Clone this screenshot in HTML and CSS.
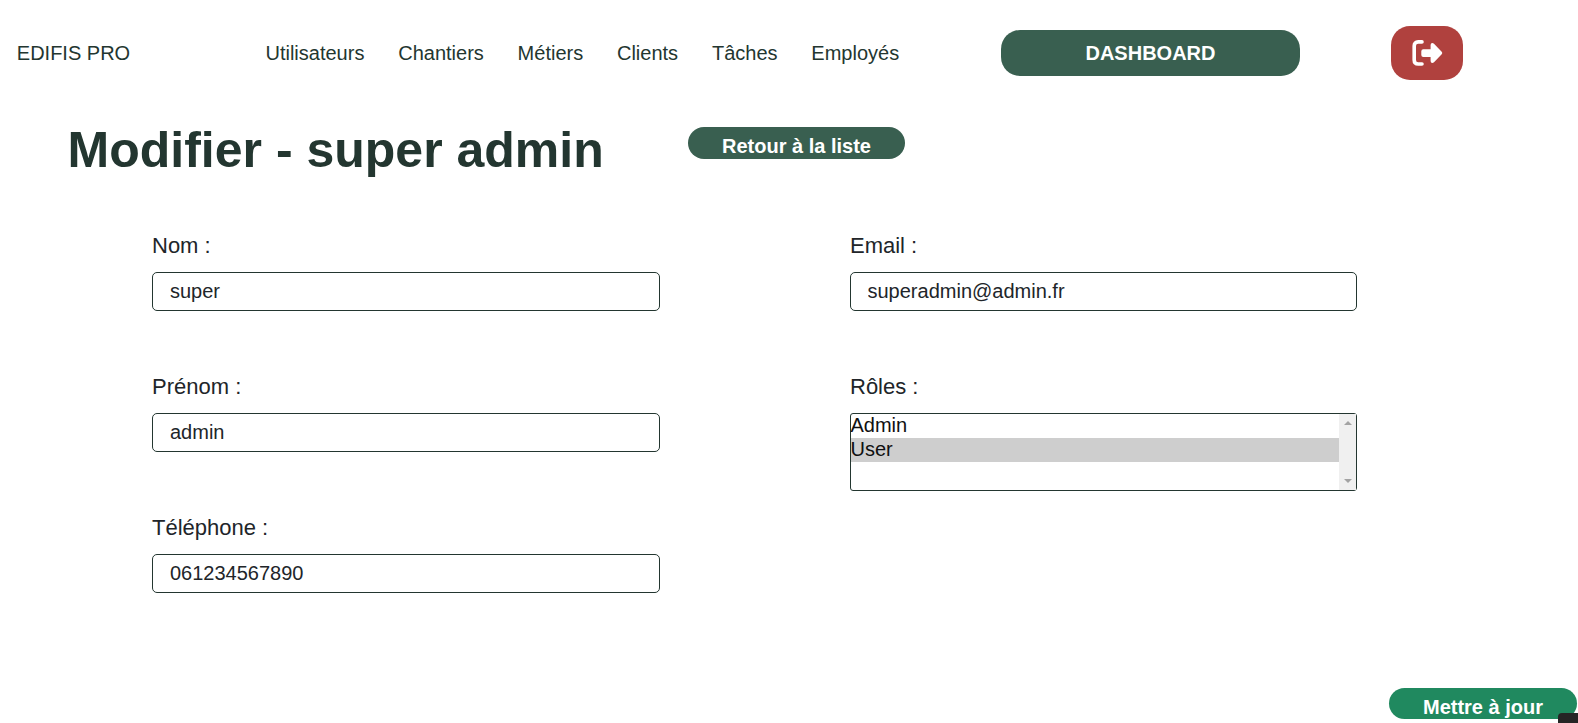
FILE: index.html
```html
<!DOCTYPE html>
<html lang="fr">
<head>
<meta charset="utf-8">
<title>Edifis Pro</title>
<link rel="stylesheet" href="styles.css">
</head>
<body>
<header class="topbar">
  <a class="brand">EDIFIS PRO</a>
  <nav class="menu">
    <a>Utilisateurs</a>
    <a>Chantiers</a>
    <a>Métiers</a>
    <a>Clients</a>
    <a>Tâches</a>
    <a>Employés</a>
  </nav>
  <a class="dashboard">DASHBOARD</a>
  <a class="logout" aria-label="Déconnexion">
    <svg width="32" height="28" viewBox="0 0 32 28">
      <path d="M11 2.900H7.200Q3.200 2.900 3.200 6.900V21Q3.200 25 7.200 25H11" fill="none" stroke="#fff" stroke-width="3.600" stroke-linecap="round"/>
      <path d="M12.300 10.300H19.600V6Q19.600 3.900 21.300 3.900Q22.200 3.900 23 4.700L30.700 12.700Q31.900 14 30.700 15.300L23 23.300Q22.200 24.100 21.300 24.100Q19.600 24.100 19.600 22V18H12.300Q10.300 18 10.300 16V12.300Q10.300 10.300 12.300 10.300Z" fill="#fff"/>
    </svg>
  </a>
</header>
<main>
  <div class="heading">
    <h1>Modifier - super admin</h1>
    <a class="pill back">Retour à la liste</a>
  </div>
  <form class="fields">
    <div class="column">
      <div class="field"><label for="nom">Nom :</label><input id="nom" type="text" value="super"></div>
      <div class="field"><label for="prenom">Prénom :</label><input id="prenom" type="text" value="admin"></div>
      <div class="field"><label for="tel">Téléphone :</label><input id="tel" type="text" value="061234567890"></div>
    </div>
    <div class="column">
      <div class="field"><label for="email">Email :</label><input id="email" type="text" value="superadmin@admin.fr"></div>
      <div class="field">
        <label>Rôles :</label>
        <div class="listbox" role="listbox">
          <div class="options">
            <div class="option">Admin</div>
            <div class="option selected">User</div>
          </div>
          <div class="scrollbar">
            <svg width="8" height="4" viewBox="0 0 8 4"><path d="M0 4L4 0L8 4Z" fill="#a3a3a3"/></svg>
            <svg width="8" height="4" viewBox="0 0 8 4"><path d="M0 0L4 4L8 0Z" fill="#a3a3a3"/></svg>
          </div>
        </div>
      </div>
    </div>
  </form>
  <div class="actions"><a class="pill submit">Mettre à jour</a></div>
</main>
<div class="corner-tab"></div>
</body>
</html>
```
FILE: styles.css
```css
* { box-sizing: border-box; }
body {
  margin: 0;
  height: 723px;
  overflow: hidden;
  position: relative;
  background: #fff;
  color: #212529;
  font: 20px/24px "Liberation Sans", Arial, sans-serif;
}
.topbar {
  display: flex;
  align-items: center;
  height: 106px;
  padding-left: 16.800px;
  color: #233630;
}
.brand { width: 248.700px; }
.menu { display: flex; gap: 33.800px; width: 735.500px; }
.dashboard {
  width: 299px;
  height: 46px;
  border-radius: 19px;
  background: #395f50;
  color: #fff;
  font-weight: bold;
  line-height: 46px;
  text-align: center;
}
.logout {
  display: flex;
  align-items: center;
  justify-content: center;
  width: 72px;
  height: 54px;
  margin-left: 91px;
  border-radius: 19px;
  background: #b0413e;
}
.heading {
  display: flex;
  align-items: flex-start;
  height: 125px;
  padding-left: 67.600px;
}
h1 {
  width: 620.400px;
  margin: 14px 0 0;
  color: #233630;
  font-size: 50px;
  line-height: 60px;
  white-space: nowrap;
}
.pill {
  display: block;
  padding-top: 7px;
  border-radius: 16px;
  color: #fff;
  font-weight: bold;
  text-align: center;
}
.back { width: 217px; height: 32px; margin-top: 21px; background: #395f50; }
.fields {
  display: grid;
  grid-template-columns: 508px 507px;
  column-gap: 190px;
  height: 457px;
  padding-left: 152px;
}
.column { display: flex; flex-direction: column; gap: 61px; }
.field { display: flex; flex-direction: column; }
label { height: 41px; font-size: 22px; line-height: 29px; }
input {
  width: 100%;
  height: 39px;
  padding: 0 17px;
  border: 1px solid #233630;
  border-radius: 5px;
  background: #fff;
  color: #212529;
  font: inherit;
  outline: none;
}
#email { padding-left: 16.500px; }
.listbox {
  display: flex;
  height: 78px;
  border: 1px solid #233630;
  border-radius: 3px;
  color: #101010;
}
.options { flex: 1; }
.option { height: 24px; line-height: 23px; text-indent: -0.500px; }
.selected { background: #cecece; }
.scrollbar {
  display: flex;
  flex-direction: column;
  align-items: center;
  justify-content: space-between;
  width: 17px;
  padding: 7px 0;
  background: #f0f0f0;
}
.actions { display: flex; justify-content: flex-end; padding-right: 1px; }
.submit { width: 188px; height: 31px; background: #20895f; }
.corner-tab {
  position: absolute;
  right: 0;
  bottom: 0;
  width: 20px;
  height: 10px;
  border-top-left-radius: 4px;
  background: #252525;
}
```
